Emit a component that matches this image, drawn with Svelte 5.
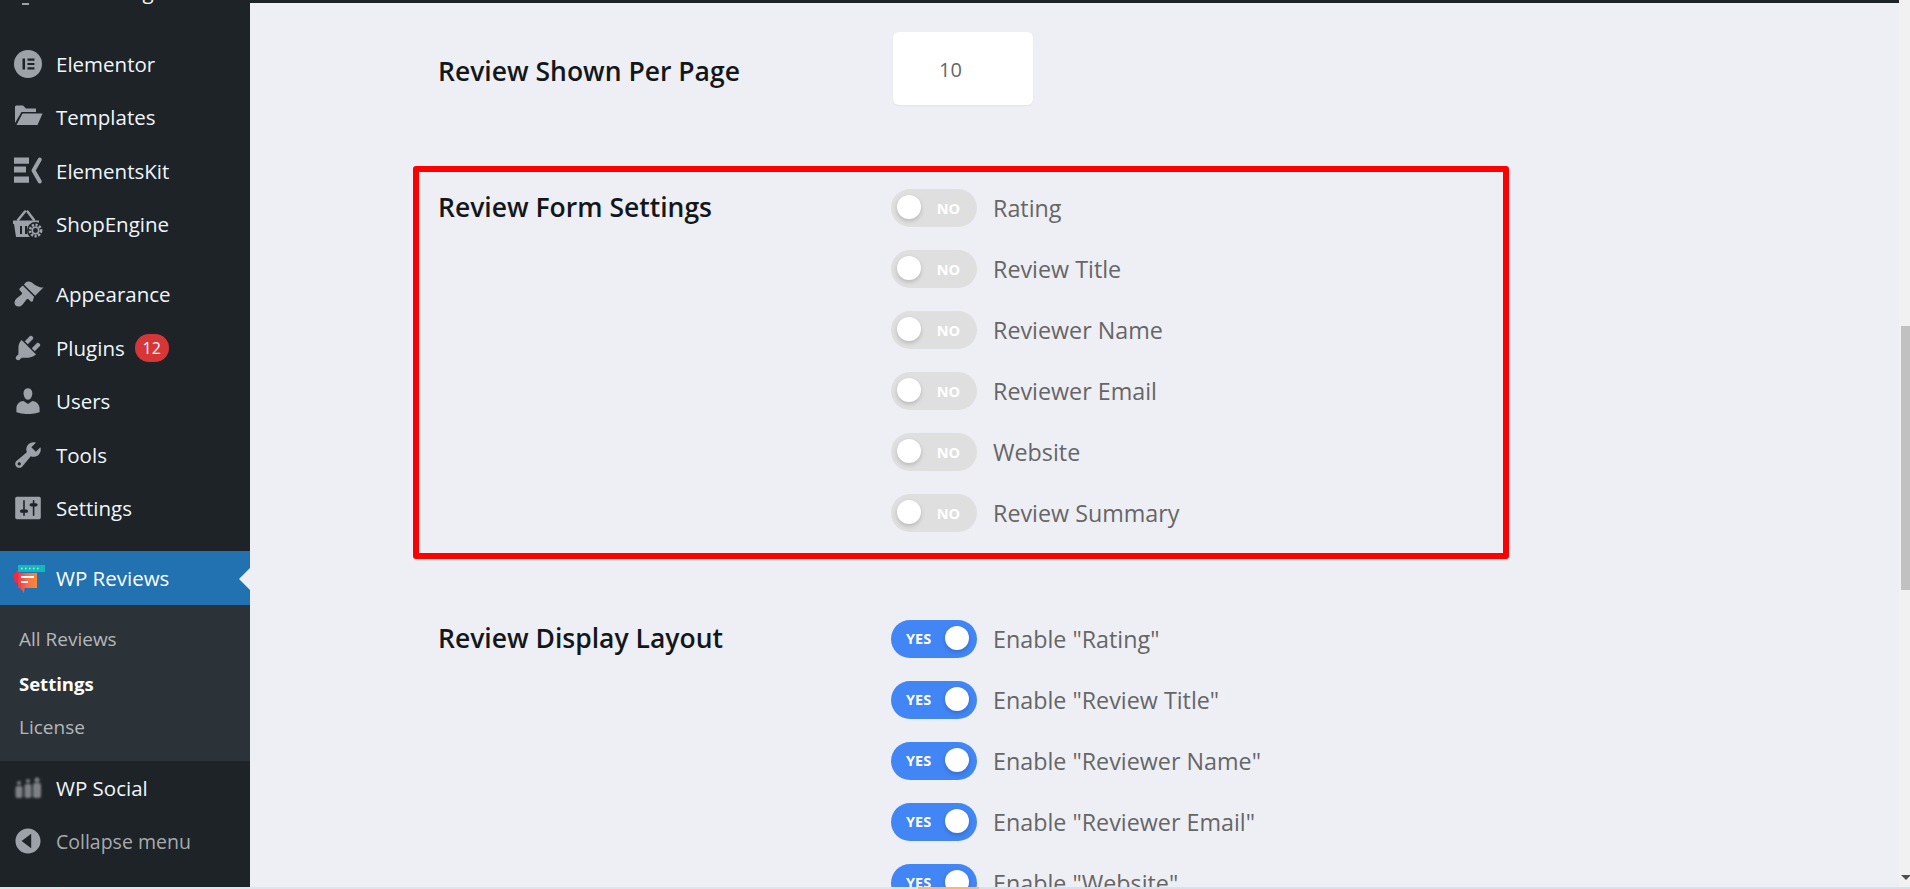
<script lang="ts">
  const topMenu = [
    { label: 'Elementor', icon: 'elementor' },
    { label: 'Templates', icon: 'folder' },
    { label: 'ElementsKit', icon: 'ekit' },
    { label: 'ShopEngine', icon: 'shop' }
  ];
  const midMenu = [
    { label: 'Appearance', icon: 'brush' },
    { label: 'Plugins', icon: 'plug', badge: 12 },
    { label: 'Users', icon: 'user' },
    { label: 'Tools', icon: 'wrench' },
    { label: 'Settings', icon: 'sliders' }
  ];
  const subMenu = ['All Reviews', 'Settings', 'License'];

  const dash = {
    brush: 'M14.48 11.06L7.41 3.99l1.5-1.5c.5-.56 2.3-.47 3.51.32 1.21.8 1.43 1.28 2.91 2.1 1.18.64 2.45 1.26 4.45.85zm-.71.71L6.7 4.7 4.93 6.47c-.39.39-.39 1.02 0 1.41l1.06 1.06c.39.39.39 1.03 0 1.42-.6.6-1.43 1.11-2.21 1.69-.35.26-.7.53-1.01.84-1.43 1.43-1.42 3.36-.5 4.28.92.92 2.85.93 4.28-.5.31-.31.58-.66.84-1.01.58-.78 1.09-1.61 1.69-2.21.39-.39 1.03-.39 1.42 0l1.06 1.06c.39.39 1.02.39 1.41 0z',
    plug: 'M13.11 4.36L9.87 7.6 8 5.73l3.24-3.24c.35-.34 1.05-.2 1.56.32.52.51.66 1.21.31 1.55zm-8 1.77l.91-1.12 9.01 9.01-1.19.84c-.71.71-2.63 1.16-3.82 1.16H6.14L4.9 17.26c-.59.59-1.54.59-2.12 0-.59-.58-.59-1.53 0-2.12l1.24-1.24v-3.88c0-1.13.4-3.19 1.09-3.89zm7.26 3.97l3.24-3.24c.34-.35 1.04-.21 1.55.31.52.51.66 1.21.31 1.55l-3.24 3.25z',
    user: 'M10 9.25c-2.27 0-2.73-3.44-2.73-3.44C7 4.02 7.82 2 9.97 2c2.16 0 2.98 2.02 2.71 3.81 0 0-.41 3.44-2.68 3.44zm0 2.57L12.72 10c2.39 0 4.52 2.33 4.52 4.53v2.49s-3.65 1.13-7.24 1.13c-3.65 0-7.24-1.13-7.24-1.13v-2.49c0-2.25 1.94-4.48 4.47-4.48z',
    wrench: 'M16.68 9.77c-1.34 1.34-3.3 1.67-4.95.99l-5.41 6.52c-.99.99-2.59.99-3.58 0s-.99-2.59 0-3.57l6.52-5.42c-.68-1.65-.35-3.61.99-4.95 1.28-1.28 3.12-1.62 4.72-1.06l-2.89 2.89 2.82 2.82 2.86-2.87c.53 1.58.18 3.39-1.08 4.65zM3.81 16.21c.4.39 1.04.39 1.43 0 .4-.4.4-1.04 0-1.43-.39-.4-1.03-.4-1.43 0-.39.39-.39 1.03 0 1.43z',
    sliders: 'M18 16V4c0-.55-.45-1-1-1H3c-.55 0-1 .45-1 1v12c0 .55.45 1 1 1h14c.55 0 1-.45 1-1zM8 11h1c.55 0 1 .45 1 1s-.45 1-1 1H8v1.500c0 .28-.22.5-.5.5s-.5-.22-.5-.5V13H6c-.55 0-1-.45-1-1s.45-1 1-1h1V5.500c0-.28.22-.5.5-.5s.5.22.5.5V11zm5-2h-1c-.55 0-1-.45-1-1s.45-1 1-1h1V5.500c0-.28.22-.5.5-.5s.5.22.5.5V7h1c.55 0 1 .45 1 1s-.45 1-1 1h-1v5.500c0 .28-.22.5-.5.5s-.5-.22-.5-.5V9z',
    collapse: 'M10 2.16c4.33 0 7.84 3.51 7.84 7.84s-3.51 7.84-7.84 7.84-7.84-3.51-7.84-7.84S5.670 2.160 10 2.160zM12 14.500V5.500L6 10z'
  };

  const formFields = ['Rating', 'Review Title', 'Reviewer Name', 'Reviewer Email', 'Website', 'Review Summary'];
  const layoutFields = ['Enable "Rating"', 'Enable "Review Title"', 'Enable "Reviewer Name"', 'Enable "Reviewer Email"', 'Enable "Website"'];
</script>

{#snippet icon(name)}
  {#if name === 'elementor'}
    <svg class="ico" viewBox="0 0 32 32">
      <circle cx="16" cy="16" r="14" fill="#9ca2a7" />
      <path d="M10.500 10.500h2.500v11h-2.500zM15.500 10.500h7v2.200h-7zM15.500 14.900h7v2.200h-7zM15.500 19.300h7v2.200h-7z" fill="#1d2327" />
    </svg>
  {:else if name === 'folder'}
    <svg class="ico" viewBox="0 0 32 32">
      <path d="M4 4.500h7l3 3h10v3.500H9.500L3 22V5.500z" fill="#9ca2a7" />
      <path d="M10.500 12.500H30.500L25.500 24H4.500z" fill="#9ca2a7" />
    </svg>
  {:else if name === 'ekit'}
    <svg class="ico" viewBox="0 0 32 32">
      <path d="M2 2.500h15v6.300H2zM2 11.500h12v6H2zM2 21.500h15v6.300H2z" fill="#9ca2a7" />
      <path d="M27.800 4.500 21.500 15.500 27.800 26.500" fill="none" stroke="#9ca2a7" stroke-width="4" stroke-linecap="round" stroke-linejoin="round" />
    </svg>
  {:else if name === 'shop'}
    <svg class="ico shop" viewBox="0 0 32 32">
      <path d="M6 12 13 3.500M22 12 15.500 3.500" stroke="#9ca2a7" stroke-width="2.500" fill="none" stroke-linecap="round" />
      <path d="M1 12.500h26v3.500l-2 13H4L2 16H1z" fill="#9ca2a7" />
      <path d="M8 18h2v8H8zM13 18h2v8h-2z" fill="#1d2327" />
      <circle cx="23.500" cy="22.500" r="8.500" fill="#1d2327" />
      <circle cx="23.500" cy="22.500" r="5.500" fill="none" stroke="#9ca2a7" stroke-width="2.800" stroke-dasharray="2.200 1.400" />
      <circle cx="23.500" cy="22.500" r="3.200" fill="none" stroke="#9ca2a7" stroke-width="1.500" />
    </svg>
  {:else}
    <svg class="ico" viewBox="0 0 20 20"><path d={dash[name]} fill="#9ca2a7" fill-rule="evenodd" /></svg>
  {/if}
{/snippet}

{#snippet toggleRow(label, on)}
  <div class="field">
    <span class="toggle" class:on>
      {#if on}
        <span class="word">YES</span><span class="knob"></span>
      {:else}
        <span class="knob"></span><span class="word">NO</span>
      {/if}
    </span>
    <span class="field-label">{label}</span>
  </div>
{/snippet}

<div class="page">
  <div class="shell">
    <aside class="sidebar">
      <ul class="menu clipped">
        <li><span class="stub"></span><span class="label">Marketing</span></li>
      </ul>
      <ul class="menu sep top-group">
        {#each topMenu as item}
          <li>{@render icon(item.icon)}<span class="label">{item.label}</span></li>
        {/each}
      </ul>
      <ul class="menu sep">
        {#each midMenu as item}
          <li>
            {@render icon(item.icon)}<span class="label">{item.label}</span>
            {#if item.badge}<span class="badge">{item.badge}</span>{/if}
          </li>
        {/each}
      </ul>
      <div class="current">
        <svg class="ico" viewBox="0 0 32 32">
          <defs>
            <linearGradient id="bubble" x1="0" y1="0" x2="1" y2="0">
              <stop offset="0" stop-color="#f0384a" />
              <stop offset="0.5" stop-color="#f5704a" />
              <stop offset="1" stop-color="#f58a35" />
            </linearGradient>
          </defs>
          <path d="M1 13.500 4 10l1-1.500 3 1V12H6v9H3z" fill="#ee2a45" />
          <rect x="6" y="3" width="27" height="7" fill="#14b8b8" />
          <path d="M9 6.500h1.500M13 6.500h1.500M17 6.500h1.500M21 6.500h1.500M25 6.500h1.500" stroke="#bdeeee" stroke-width="1.600" />
          <path d="M6 11h19v15H12.500L12 31l-4-5H6z" fill="url(#bubble)" />
          <path d="M9 15h13M9 20h7" stroke="#fff" stroke-width="2" />
        </svg>
        <span class="label">WP Reviews</span>
      </div>
      <ul class="sub">
        {#each subMenu as entry, i}
          <li class:active={i === 1}>{entry}</li>
        {/each}
      </ul>
      <ul class="menu">
        <li>
          <svg class="ico" viewBox="0 0 32 32">
            <defs><filter id="soft"><feGaussianBlur stdDeviation="0.9" /></filter></defs>
            <g fill="#7d8185" filter="url(#soft)">
              <circle cx="7" cy="11" r="2" />
              <rect x="3.500" y="14" width="7" height="12" rx="2" />
              <circle cx="16" cy="9" r="2" />
              <rect x="12.500" y="12" width="7" height="14" rx="2" />
              <circle cx="25" cy="8" r="2.500" />
              <rect x="21" y="11" width="8" height="15" rx="2" />
            </g>
          </svg>
          <span class="label">WP Social</span>
        </li>
        <li class="collapse">{@render icon('collapse')}<span class="label">Collapse menu</span></li>
      </ul>
    </aside>

    <main class="content">
      <section class="row first">
        <h3>Review Shown Per Page</h3>
        <div class="number">10</div>
      </section>

      <section class="row highlight">
        <h3>Review Form Settings</h3>
        <div class="fields">
          {#each formFields as f}
            {@render toggleRow(f, false)}
          {/each}
        </div>
      </section>

      <section class="row last">
        <h3>Review Display Layout</h3>
        <div class="fields">
          {#each layoutFields as f}
            {@render toggleRow(f, true)}
          {/each}
        </div>
      </section>
    </main>

    <div class="scrollbar">
      <div class="thumb"></div>
      <div class="arrow"></div>
    </div>
  </div>

  <div class="taskbar">
    <span class="seg-a"></span>
    <span class="seg-b"></span>
    <span class="seg-c"></span>
    <span class="seg-d"></span>
  </div>
</div>

<style>
  :global(body) {
    margin: 0;
    overflow: hidden;
    font-family: 'Open Sans', 'Noto Sans', sans-serif;
  }

  .page {
    height: 889px;
    display: flex;
    flex-direction: column;
    overflow: hidden;
  }

  .shell {
    flex: 1;
    min-height: 0;
    display: flex;
  }

  .sidebar {
    width: 250px;
    flex: none;
    background: #1d2327;
    overflow: hidden;
  }

  ul {
    list-style: none;
    margin: 0;
    padding: 0;
  }

  .menu li {
    height: 53.4px;
    display: flex;
    align-items: center;
    padding-left: 12px;
    color: #f0f6fc;
  }

  .clipped {
    margin-top: -36.200px;
  }

  .stub {
    width: 7px;
    height: 2px;
    flex: none;
    margin: 27px 16px 0 10px;
    background: #9ca2a7;
  }

  .sep {
    margin-top: 16.800px;
  }

  .top-group {
    margin-top: 20.100px;
  }

  .ico {
    width: 32px;
    height: 32px;
    flex: none;
    overflow: visible;
  }

  .label {
    margin-left: 12px;
    font-size: 20.500px;
    white-space: nowrap;
  }

  .collapse {
    color: #a7aaad !important;
  }

  .collapse .label {
    font-size: 19.500px;
  }

  .badge {
    margin-left: 10px;
    width: 34px;
    height: 28px;
    border-radius: 14px;
    background: #d63638;
    color: #fff;
    font-size: 16px;
    display: flex;
    align-items: center;
    justify-content: center;
  }

  .current {
    position: relative;
    height: 54px;
    margin-top: 16.400px;
    display: flex;
    align-items: center;
    padding-left: 12px;
    background: #2271b1;
    color: #fff;
  }

  .current::after {
    content: '';
    position: absolute;
    right: 0;
    top: 17px;
    border: 11px solid transparent;
    border-right-color: #eeeff5;
    border-left-width: 0;
  }

  .sub {
    background: #2c3338;
    padding: 12px 0;
  }

  .sub li {
    height: 44px;
    display: flex;
    align-items: center;
    padding-left: 19px;
    font-size: 19px;
    color: #b3b7bb;
  }

  .sub li.active {
    color: #fff;
    font-weight: 700;
    font-size: 18.500px;
  }

  .content {
    flex: 1;
    min-width: 0;
    background: #eeeff5;
    border-top: 3px solid #1d2327;
    padding: 29px 0 0 163px;
    overflow: hidden;
  }

  .row {
    display: grid;
    grid-template-columns: 453px 1fr;
    padding-left: 25px;
    width: 1096px;
    box-sizing: border-box;
  }

  h3 {
    margin: -1px 0 0;
    font-size: 26.500px;
    font-weight: 600;
    color: #14171a;
    line-height: 38px;
  }

  .first {
    height: 73px;
    align-items: center;
  }

  .first h3 {
    margin-top: 4px;
  }

  .number {
    width: 140px;
    height: 73px;
    margin-left: 2px;
    box-sizing: border-box;
    padding: 1px 0 0 46px;
    display: flex;
    align-items: center;
    background: #fff;
    border-radius: 6px;
    box-shadow: 0 1px 2px rgba(0, 0, 0, 0.05);
    font-size: 20px;
    color: #666;
  }

  .highlight {
    margin-top: 61px;
    border: 6px solid #ff0000;
    border-radius: 3px;
    padding: 17px 0 21.500px 19px;
  }

  .last {
    margin-top: 61px;
  }

  .fields {
    display: flex;
    flex-direction: column;
    gap: 23.400px;
  }

  .field {
    display: flex;
    align-items: center;
    gap: 16px;
    height: 37.600px;
  }

  .toggle {
    width: 86px;
    height: 37.600px;
    flex: none;
    box-sizing: border-box;
    padding: 0 7px 0 6px;
    border-radius: 19px;
    background: #dfdfdf;
    display: flex;
    align-items: center;
    justify-content: space-between;
    color: #fff;
    font-size: 14.500px;
    font-weight: 700;
  }

  .toggle.on {
    background: #4285f4;
    padding: 0 8px 0 15px;
  }

  .word {
    margin: 1px 10px 0 0;
  }

  .on .word {
    margin: 0;
  }

  .knob {
    width: 24px;
    height: 24px;
    margin-top: -1px;
    border-radius: 50%;
    background: #fff;
    box-shadow: 0 2px 4px rgba(0, 0, 0, 0.18);
  }

  .field-label {
    padding-top: 1px;
    font-size: 23.300px;
    color: #666;
    white-space: nowrap;
  }

  .scrollbar {
    position: relative;
    width: 11px;
    flex: none;
    background: #f1f1f1;
    box-sizing: border-box;
    padding: 326px 0 0 2px;
  }

  .thumb {
    height: 264px;
    background: #c1c1c1;
  }

  .arrow {
    position: absolute;
    right: -1px;
    bottom: 7px;
    border: 5px solid transparent;
    border-top: 5px solid #505050;
    border-bottom-width: 0;
  }

  .taskbar {
    height: 2px;
    flex: none;
    display: flex;
  }

  .seg-a {
    width: 60px;
    background: #cfe8f0;
  }

  .seg-b {
    width: 858px;
    background: #dbe6f0;
  }

  .seg-c {
    width: 61px;
    background: #f8b678;
  }

  .seg-d {
    flex: 1;
    background: #d6e1ef;
  }
</style>
